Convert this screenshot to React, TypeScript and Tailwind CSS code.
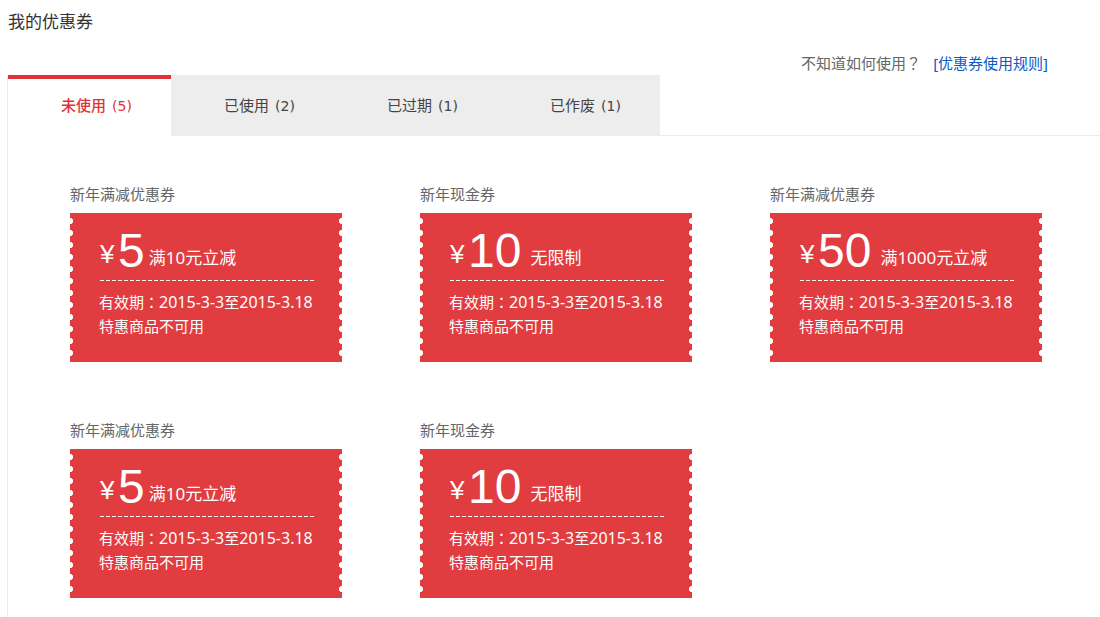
import { useState } from "react";

type Coupon = { title: string; amount: number; condition: string };

const tabs = [
  { label: "未使用", count: 5 },
  { label: "已使用", count: 2 },
  { label: "已过期", count: 1 },
  { label: "已作废", count: 1 },
];

const coupons: Coupon[] = [
  { title: "新年满减优惠券", amount: 5, condition: "满10元立减" },
  { title: "新年现金券", amount: 10, condition: "无限制" },
  { title: "新年满减优惠券", amount: 50, condition: "满1000元立减" },
  { title: "新年满减优惠券", amount: 5, condition: "满10元立减" },
  { title: "新年现金券", amount: 10, condition: "无限制" },
];

function CouponCard({ title, amount, condition }: Coupon) {
  return (
    <li>
      <h2 className="text-[15px] leading-5 text-[#666666]">{title}</h2>
      <div className="mt-[9px] flex h-[149px] bg-[#e13c40] pt-0.5 pb-[3px] text-white">
        <div className="w-[3px] bg-[radial-gradient(circle_at_0_50%,#fff_2.8px,transparent_3.4px)] bg-size-[3px_12px] bg-repeat-y" />
        <div className="flex-1 pt-3 pl-[26px]">
          <p className="flex h-[53px] items-start pl-px leading-none">
            <span className="mt-3.5 w-[18px] font-['Liberation_Sans'] text-[26px] leading-none">¥</span>
            <span className="font-['Liberation_Sans'] text-5xl leading-none">{amount}</span>
            <span className={amount < 10 ? "mt-[22px] ml-1 text-[17px] leading-none" : "mt-[22px] ml-[9px] text-[17px] leading-none"}>
              {condition}
            </span>
          </p>
          <div className="ml-px h-px w-[214px] bg-[repeating-linear-gradient(to_right,#fff_0_4px,transparent_4px_6px)]" />
          <p className="mt-[9px] text-[15px] leading-6 whitespace-nowrap">
            有效期<span lang="zh-TW" className="font-['Noto_Sans_CJK_TC',sans-serif]">：</span>
            <span className="text-base leading-6">2015-3-3</span>至
            <span className="text-base leading-6">2015-3.18</span>
          </p>
          <p className="text-[15px] leading-6">特惠商品不可用</p>
        </div>
        <div className="w-[3px] bg-[radial-gradient(circle_at_100%_50%,#fff_2.8px,transparent_3.4px)] bg-size-[3px_12px] bg-repeat-y" />
      </div>
    </li>
  );
}

export default function App() {
  const [active, setActive] = useState(0);
  return (
    <main lang="zh-CN" className="min-h-screen bg-white pl-[7px] font-['Noto_Sans','Noto_Sans_CJK_SC',sans-serif]">
      <h1 className="pt-2.5 pl-px text-[17px] leading-6 text-[#333333]">我的优惠券</h1>
      <p className="flex justify-end gap-3 pt-[19px] pr-[52px] text-[15px] leading-5 text-[#666666]">
        <span>
          不知道如何使用<span lang="zh-TW" className="font-['Noto_Sans_CJK_TC',sans-serif]">？</span>
        </span>
        <a href="#rules" className="text-[#0a5ac8]">[优惠券使用规则]</a>
      </p>
      <section className="mt-0.5 min-h-[542px] border-l border-[#ebebeb]">
        <div role="tablist" className="flex border-b border-[#ebebeb]">
          {tabs.map((tab, i) => (
            <button
              key={tab.label}
              role="tab"
              aria-selected={i === active}
              onClick={() => setActive(i)}
              className={
                i === active
                  ? "-mb-px h-[61px] w-[163px] border-t-4 border-[#e03236] bg-white pb-1 pl-3.5 text-[15px] font-medium text-[#e03236]"
                  : "-mb-px h-[61px] w-[163px] bg-[#ededed] pl-3.5 text-[15px] text-[#444444]"
              }
            >
              {tab.label} <span className="ml-0.5 font-['DejaVu_Sans'] text-sm">({tab.count})</span>
            </button>
          ))}
        </div>
        <ul className="grid grid-cols-[repeat(auto-fill,272px)] gap-x-[78px] gap-y-[58px] pt-12 pl-[62px]">
          {coupons.map((coupon, i) => (
            <CouponCard key={i} {...coupon} />
          ))}
        </ul>
      </section>
    </main>
  );
}
